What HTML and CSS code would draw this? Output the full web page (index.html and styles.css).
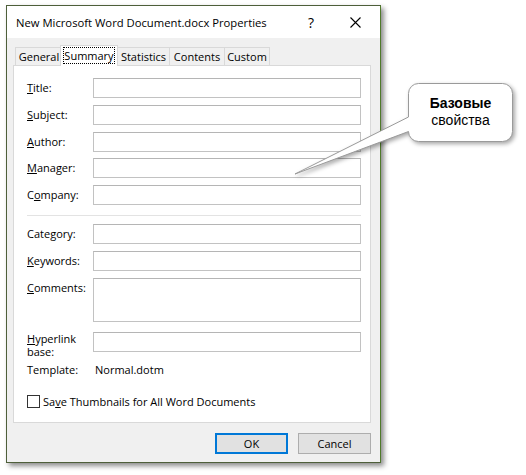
FILE: index.html
```html
<!DOCTYPE html>
<html>
<head>
<meta charset="utf-8">
<link rel="stylesheet" href="styles.css">
</head>
<body>
<div class="stage">
  <div class="dialog">
    <div class="titlebar">
      <span class="title">New Microsoft Word Document.docx Properties</span>
      <span class="help">?</span>
      <svg class="close" width="11" height="11" viewBox="0 0 11 11"><path d="M0.5 0.5L10.5 10.5M10.5 0.5L0.5 10.5" stroke="#000" stroke-width="1.1"/></svg>
    </div>
    <div class="body">
      <div class="tabs">
        <div class="tab t-general">General</div>
        <div class="tab selected"><span class="focus">Summary</span></div>
        <div class="tab t-stats">Statistics</div>
        <div class="tab t-contents">Contents</div>
        <div class="tab t-custom">Custom</div>
      </div>
      <div class="panel">
        <div class="fields">
          <div class="label"><u>T</u>itle:</div><div class="input"></div>
          <div class="label"><u>S</u>ubject:</div><div class="input"></div>
          <div class="label"><u>A</u>uthor:</div><div class="input"></div>
          <div class="label"><u>M</u>anager:</div><div class="input"></div>
          <div class="label">C<u>o</u>mpany:</div><div class="input"></div>
        </div>
        <div class="sep"></div>
        <div class="fields second">
          <div class="label">Cate<u>g</u>ory:</div><div class="input"></div>
          <div class="label"><u>K</u>eywords:</div><div class="input"></div>
          <div class="label"><u>C</u>omments:</div><div class="input tall"></div>
          <div class="label two"><u>H</u>yperlink<br>base:</div><div class="input hyper"></div>
        </div>
        <div class="template">
          <span class="tlabel">Template:</span><span class="tvalue">Normal.dotm</span>
        </div>
        <div class="check">
          <span class="box"></span><span>Sa<u>v</u>e Thumbnails for All Word Documents</span>
        </div>
      </div>
      <div class="buttons">
        <div class="btn ok">OK</div>
        <div class="btn">Cancel</div>
      </div>
    </div>
  </div>
  <div class="callout">
    <svg class="bubble" width="236" height="110" viewBox="0 0 236 110">
      <path d="M128.5 5.5 H212.5 A10 10 0 0 1 222.5 15.5 V53.5 A10 10 0 0 1 212.5 63.5 H128.5 A10 10 0 0 1 118.5 53.5 L5 96 L118.5 39 V15.5 A10 10 0 0 1 128.5 5.5 Z" fill="#fff" stroke="#9a9a9a" stroke-width="1"/>
    </svg>
    <div class="ctext"><b>Базовые</b><br>свойства</div>
  </div>
</div>
</body>
</html>
```
FILE: styles.css
```css
* { box-sizing: border-box; }
html, body { margin: 0; padding: 0; background: #fff; }
body { font-family: "Open Sans", "Noto Sans", sans-serif; font-size: 11px; color: #000; }
.stage { position: relative; width: 526px; height: 475px; padding: 5px 0 0 6px; }
.dialog {
  width: 375px; height: 458px;
  border: 1px solid #4e5f3a;
  border-right-color: #4f7a2a;
  background: #f0f0f0;
  box-shadow: 3px 3px 5px rgba(0,0,0,0.45);
  display: flex; flex-direction: column;
}
.titlebar {
  height: 32px; background: #fff;
  display: flex; align-items: center;
  padding-left: 9px;
}
.title { font-size: 11.25px; flex: 1; }
.help { font-size: 14px; margin-right: 36px; }
.close { margin-right: 19px; }
.body { flex: 1; padding: 7px 9px 8px 6px; display: flex; flex-direction: column; }
.tabs { height: 20px; display: flex; align-items: flex-end; padding-left: 2px; }
.tab {
  height: 18px; line-height: 17px;
  padding: 0;
  border: 1px solid #d9d9d9; border-bottom: none;
  background: #f0f0f0;
  margin-right: -1px;
  text-align: center;
  white-space: nowrap;
}
.t-general { width: 48px; }
.t-stats { width: 53px; }
.t-contents { width: 56px; }
.t-custom { width: 46px; }
.tab.selected {
  position: relative; z-index: 2;
  width: 58px; height: 21px;
  margin: 0 -1px -1px -2px;
  background: #fff;
  padding: 1px 2px 0;
}
.focus {
  display: block; height: 17px; line-height: 15px;
  border: 1px dotted #000;
}
.panel {
  height: 358px; background: #fff;
  border: 1px solid #d9d9d9;
  padding: 12px 9px 0 13px;
}
.fields {
  display: grid; grid-template-columns: 66px 1fr;
  row-gap: 6.75px;
}
.second { row-gap: 7px; }
.label { line-height: 20px; white-space: nowrap; }
.label.two { line-height: 13px; margin-top: 3px; }
.input { height: 20px; border: 1px solid #c2c2c2; border-top-color: #b5b5b5; background: #fff; }
.input.tall { height: 44px; }
.input.hyper { margin-top: 3px; }
.sep { height: 1px; background: #e3e3e3; margin: 10px 0 8px; }
.template { margin-top: 4px; height: 16px; line-height: 16px; display: flex; }
.tlabel { width: 68px; }
.check { margin-top: 17px; display: flex; align-items: center; height: 13px; }
.box { width: 13px; height: 13px; border: 1px solid #333; background: #fff; margin-right: 3px; }
.buttons { margin-top: 10px; display: flex; justify-content: flex-end; gap: 10px; }
.btn {
  width: 73px; height: 21px; line-height: 19px; text-align: center;
  background: #e1e1e1; border: 1px solid #adadad;
}
.btn.ok { border-color: #0078d7; box-shadow: inset 0 0 0 1px #0078d7; }
.callout { position: absolute; left: 290px; top: 78px; width: 236px; height: 110px; }
.bubble { display: block; filter: drop-shadow(2px 2px 2px rgba(0,0,0,0.35)); }
.ctext {
  position: absolute; left: 118px; top: 17px; width: 105px;
  font-family: "Liberation Sans", Arial, sans-serif; font-size: 14px; line-height: 17px;
  text-align: center; color: #000;
}
```
